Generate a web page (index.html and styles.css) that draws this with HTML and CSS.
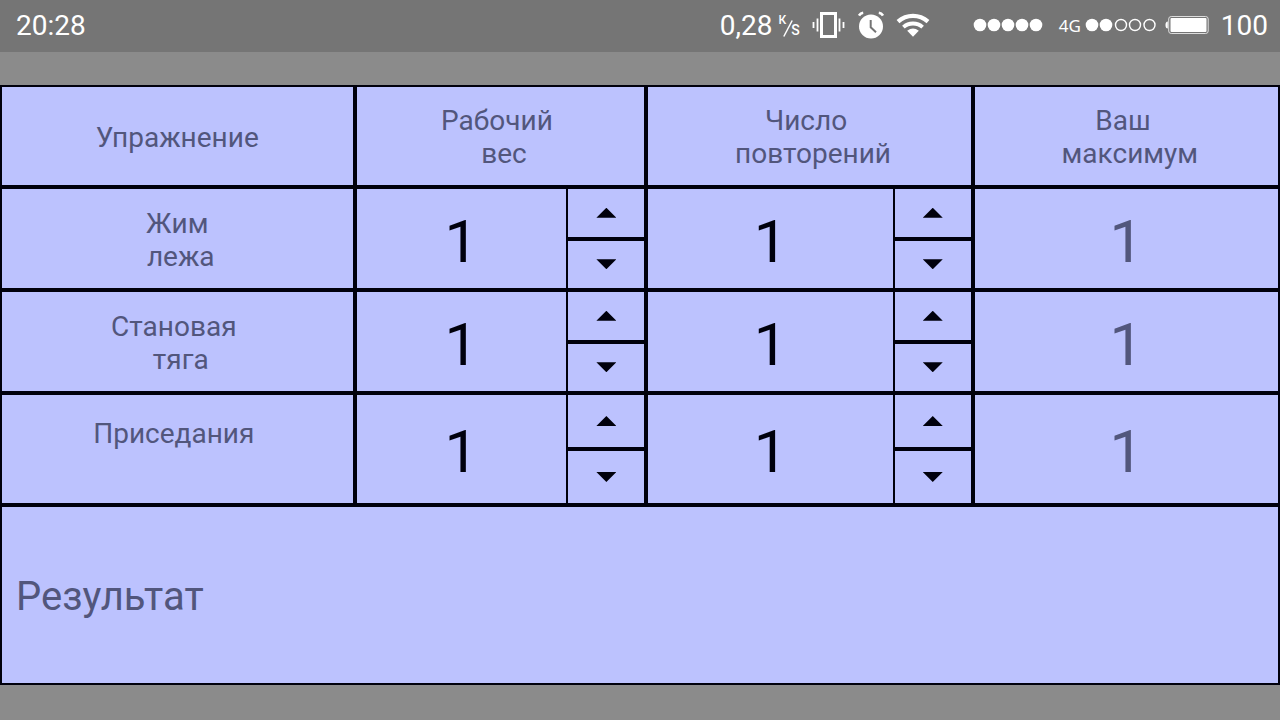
FILE: index.html
```html
<!DOCTYPE html>
<html lang="ru">
<head>
    <meta charset="UTF-8">
    <meta name="viewport" content="width=device-width, initial-scale=1">
    <title>Калькулятор максимума</title>
    <link rel="stylesheet" href="styles.css">
</head>
<body>
    <header class="status-bar">
        <span class="clock">20:28</span>
        <div class="status-icons">
            <span class="speed">0,28</span>
            <span class="unit">
                <span class="unit-top">К</span>
                <svg class="unit-slash" width="10" height="17" viewBox="0 0 10 17"><path d="M0.8 16.500L9.200 0.500" stroke="#fff" stroke-width="1.500"/></svg>
                <span class="unit-bottom">S</span>
            </span>
            <svg class="icon-vibrate" width="34" height="28" viewBox="0 0 34 28" fill="none" stroke="#fff">
                <rect x="9.5" y="2.5" width="14" height="23" stroke-width="3"/>
                <path d="M5.5 7.5v13M27.5 7.5v13M1.5 11v6M31.5 11v6" stroke-width="1.8"/>
            </svg>
            <svg class="icon-alarm" width="26" height="28" viewBox="0 0 26 28" fill="none">
                <circle cx="13" cy="15.5" r="12" fill="#fff"/>
                <path d="M1 4.6Q2.4 2.2 5.2 1.8M25 4.6Q23.6 2.2 20.8 1.8" stroke="#fff" stroke-width="2.6"/>
                <path d="M12.7 9v7.3l5.3 4.9" stroke="#757575" stroke-width="2"/>
            </svg>
            <svg class="icon-wifi" width="34" height="24" viewBox="0 0 34 24" fill="none" stroke="#fff">
                <path d="M2 8.6Q8.5 2.8 17 2.8T32 8.6" stroke-width="4.2"/>
                <path d="M7.400 14.200Q11.400 10.500 17 10.500T26.600 14.200" stroke-width="3.8"/>
                <path d="M17 23.800L11.200 17.800Q17 13.400 22.800 17.800Z" fill="#fff" stroke="none"/>
            </svg>
            <svg class="icon-signal" width="70" height="14" viewBox="0 0 70 14" fill="#fff">
                <circle cx="7" cy="7" r="6.3"/>
                <circle cx="21" cy="7" r="6.3"/>
                <circle cx="35" cy="7" r="6.3"/>
                <circle cx="49" cy="7" r="6.3"/>
                <circle cx="63" cy="7" r="6.3"/>
            </svg>
            <span class="network">4G</span>
            <svg class="icon-signal-4g" width="72" height="14" viewBox="0 0 72 14" fill="none" stroke="#fff" stroke-width="1.4">
                <circle cx="7" cy="7" r="6.3" fill="#fff" stroke="none"/>
                <circle cx="21" cy="7" r="6.3" fill="#fff" stroke="none"/>
                <circle cx="36" cy="7" r="5.5"/>
                <circle cx="50" cy="7" r="5.5"/>
                <circle cx="64.5" cy="7" r="5.5"/>
            </svg>
            <svg class="icon-battery" width="44" height="20" viewBox="0 0 44 20" fill="#fff">
                <path d="M2.8 6.5Q0.5 6.5 0.5 10t2.3 3.5z"/>
                <rect x="3.7" y="1.5" width="39.5" height="17" rx="2.5" fill="none" stroke="#ddd"/>
                <rect x="5.5" y="3" width="36" height="14" rx="1"/>
            </svg>
            <span class="battery-level">100</span>
        </div>
    </header>

    <main>
        <table class="calc">
            <colgroup>
                <col class="col-name">
                <col class="col-weight">
                <col class="col-reps">
                <col class="col-max">
            </colgroup>
            <tr class="row-head">
                <th>Упражнение</th>
                <th>Рабочий <br> вес</th>
                <th>Число <br> повторений</th>
                <th>Ваш <br> максимум</th>
            </tr>
            <tr class="row-lift">
                <th>Жим<br> лежа</th>
                <td>
                    <div class="stepper">
                        <input type="text" value="1" inputmode="numeric" aria-label="Жим лежа, рабочий вес">
                        <div class="step-buttons">
                            <button type="button" class="up" aria-label="Больше"></button>
                            <button type="button" class="down" aria-label="Меньше"></button>
                        </div>
                    </div>
                </td>
                <td>
                    <div class="stepper">
                        <input type="text" value="1" inputmode="numeric" aria-label="Жим лежа, число повторений">
                        <div class="step-buttons">
                            <button type="button" class="up" aria-label="Больше"></button>
                            <button type="button" class="down" aria-label="Меньше"></button>
                        </div>
                    </div>
                </td>
                <td class="max">1</td>
            </tr>
            <tr class="row-lift">
                <th>Становая <br> тяга</th>
                <td>
                    <div class="stepper">
                        <input type="text" value="1" inputmode="numeric" aria-label="Становая тяга, рабочий вес">
                        <div class="step-buttons">
                            <button type="button" class="up" aria-label="Больше"></button>
                            <button type="button" class="down" aria-label="Меньше"></button>
                        </div>
                    </div>
                </td>
                <td>
                    <div class="stepper">
                        <input type="text" value="1" inputmode="numeric" aria-label="Становая тяга, число повторений">
                        <div class="step-buttons">
                            <button type="button" class="up" aria-label="Больше"></button>
                            <button type="button" class="down" aria-label="Меньше"></button>
                        </div>
                    </div>
                </td>
                <td class="max">1</td>
            </tr>
            <tr class="row-squat">
                <th>Приседания <br> </th>
                <td>
                    <div class="stepper">
                        <input type="text" value="1" inputmode="numeric" aria-label="Приседания, рабочий вес">
                        <div class="step-buttons">
                            <button type="button" class="up" aria-label="Больше"></button>
                            <button type="button" class="down" aria-label="Меньше"></button>
                        </div>
                    </div>
                </td>
                <td>
                    <div class="stepper">
                        <input type="text" value="1" inputmode="numeric" aria-label="Приседания, число повторений">
                        <div class="step-buttons">
                            <button type="button" class="up" aria-label="Больше"></button>
                            <button type="button" class="down" aria-label="Меньше"></button>
                        </div>
                    </div>
                </td>
                <td class="max">1</td>
            </tr>
            <tr class="row-result">
                <td class="result" colspan="4">Результат</td>
            </tr>
        </table>
    </main>

    <script>
        // Up and down buttons change the number beside them
        document.querySelectorAll('.stepper').forEach(stepper => {
            const input = stepper.querySelector('input');

            function step(delta) {
                const value = parseInt(input.value) || 0;
                input.value = Math.max(1, value + delta);
            }

            stepper.querySelector('.up').addEventListener('click', () => step(1));
            stepper.querySelector('.down').addEventListener('click', () => step(-1));
        });
    </script>
</body>
</html>
```
FILE: styles.css
```css
* {
    box-sizing: border-box;
}
body {
    margin: 0;
    background-color: #8b8b8b;
    color: #00000c;
    font-family: Roboto, sans-serif;
}

/* Status bar */
.status-bar {
    display: flex;
    justify-content: space-between;
    align-items: center;
    height: 52px;
    padding: 0 12px 2px 16px;
    background-color: #757575;
    color: white;
    font-size: 28px;
}
.status-icons {
    display: flex;
    align-items: center;
}
.unit {
    display: flex;
    height: 24px;
    margin: 0 12px 0 6px;
    font-weight: 500;
    font-size: 12px;
    line-height: 14px;
}
.unit-slash {
    align-self: flex-end;
    margin: 0 -2px 0 -3px;
}
.unit-bottom {
    align-self: flex-end;
    font-size: 14px;
}
.icon-alarm {
    margin-left: 12px;
}
.icon-wifi {
    margin-left: 12px;
}
.icon-signal {
    margin-left: 43px;
}
.network {
    margin: 0 4px 0 16px;
    font-family: "Noto Sans", sans-serif;
    font-size: 17px;
}
.icon-battery {
    margin: 0 12px 0 8px;
}

/* Calculator table: every cell has a 2px border, so inner lines are 4px */
main {
    padding: 33px 0 35px;
}
.calc {
    width: 100%;
    table-layout: fixed;
    border-collapse: separate;
    border-spacing: 0;
}
.col-name {
    width: 27.7%;
}
.col-weight {
    width: 22.8%;
}
.col-reps {
    width: 25.5%;
}
.col-max {
    width: 24%;
}
.calc th,
.calc td {
    padding: 0;
    border: 2px solid #00000c;
    background-color: #bcc2fe;
}
.calc th {
    padding-top: 2px;
    color: #52567c;
    font-size: 28px;
    font-weight: normal;
    line-height: 33px;
    white-space: pre;
}
.row-head th {
    height: 102px;
}
.row-lift th,
.row-lift td {
    height: 103px;
}
.row-squat th,
.row-squat td {
    height: 112px;
}

/* Number with up and down buttons */
.stepper {
    display: flex;
    height: 100%;
}
.stepper input {
    flex: 1;
    min-width: 0;
    padding: 5px 0 0;
    border: none;
    background: none;
    color: inherit;
    font-family: inherit;
    font-size: 60px;
    text-align: center;
}
.step-buttons {
    display: flex;
    flex-direction: column;
    gap: 4px;
    width: 78px;
    padding-left: 2px;
    background-color: #00000c;
}
.step-buttons button {
    display: flex;
    flex: 1;
    justify-content: center;
    align-items: center;
    padding: 0;
    border: none;
    background-color: #bcc2fe;
    cursor: pointer;
}
.step-buttons button::before {
    content: "";
    width: 20px;
    height: 10px;
    background-color: #00000c;
}
.step-buttons .up::before {
    clip-path: polygon(50% 0, 100% 100%, 0 100%);
}
.step-buttons .down::before {
    clip-path: polygon(0 0, 100% 0, 50% 100%);
}
.calc .max {
    padding-top: 6px;
    color: #52567c;
    font-size: 60px;
    line-height: 70px;
    text-align: center;
}
.calc .result {
    height: 180px;
    padding: 2px 14px 0;
    color: #52567c;
    font-size: 40px;
}
```
